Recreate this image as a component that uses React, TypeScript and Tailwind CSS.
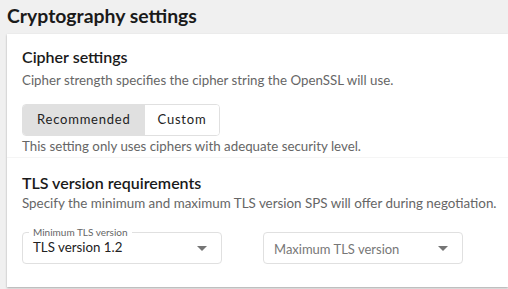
export default function App() {
  const font = { fontFamily: 'Lato, "Noto Sans", sans-serif' };
  return (
    <div className="h-[289px] w-[508px] overflow-hidden bg-[#f0f0f0]" style={font}>
      <h1 className="pl-[7px] pt-[2px] text-[19.4px] font-bold leading-[28px] text-[#1a1a1a]">Cryptography settings</h1>
      <div className="ml-[7px] mt-[4px] h-[253px] bg-white shadow-[0_1px_2px_rgba(0,0,0,0.3)]">
        <section className="border-b border-[#f5f5f5] px-[15px] pb-[2px] pt-[12px]">
          <h2 className="text-[16px] font-semibold leading-[22px] text-[#1a1a1a]">Cipher settings</h2>
          <p className="mt-[3px] text-[13.3px] leading-[18px] text-[#666]">
            Cipher strength specifies the cipher string the OpenSSL will use.
          </p>
          <div className="mt-[15px] inline-flex h-[32px] overflow-hidden rounded-[4px] border border-[#e0e0e0] text-[13px] font-normal tracking-[0.06em] text-[#222]">
            <button className="bg-[#e0e0e0] px-[14px] font-normal">Recommended</button>
            <button className="bg-white px-[13px] font-normal">Custom</button>
          </div>
          <p className="mt-[1px] text-[13.3px] leading-[18px] text-[#666]">
            This setting only uses ciphers with adequate security level.
          </p>
        </section>
        <section className="pl-[15px] pt-[14px]">
          <h2 className="text-[16px] font-semibold leading-[22px] text-[#1a1a1a]">TLS version requirements</h2>
          <p className="whitespace-nowrap text-[13.4px] leading-[18px] text-[#666]">
            Specify the minimum and maximum TLS version SPS will offer during negotiation.
          </p>
          <div className="mt-[20px] flex gap-[41px]">
            <div className="relative flex h-[32px] w-[200px] items-center justify-between rounded-[4px] border border-[#e0e0e0] pl-[10px] pr-[14px]">
              <span className="absolute -top-[7px] left-[6px] bg-white px-[4px] text-[10px] leading-[12px] text-[#666]">
                Minimum TLS version
              </span>
              <span className="text-[13.3px] text-[#222]">TLS version 1.2</span>
              <Caret />
            </div>
            <div className="flex h-[32px] w-[200px] items-center justify-between rounded-[4px] border border-[#e0e0e0] pl-[10px] pr-[14px]">
              <span className="mt-[4px] text-[13px] text-[#777]">Maximum TLS version</span>
              <Caret />
            </div>
          </div>
        </section>
      </div>
    </div>
  );
}

function Caret() {
  return (
    <svg width="10" height="5" viewBox="0 0 10 5" className="fill-[#757575]">
      <path d="M0 0h10L5 5z" />
    </svg>
  );
}
